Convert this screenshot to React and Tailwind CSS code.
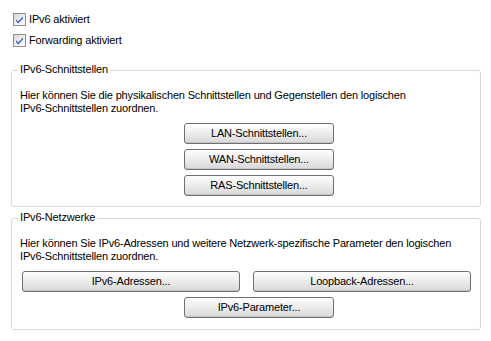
import React from "react";

function Check() {
  return (
    <svg width="13" height="13" viewBox="0 0 13 13" className="shrink-0">
      <defs>
        <linearGradient id="cbg" x1="0" y1="0" x2="1" y2="1">
          <stop offset="0" stopColor="#d9d9d9" />
          <stop offset="1" stopColor="#ffffff" />
        </linearGradient>
      </defs>
      <rect x="0.5" y="0.5" width="12" height="12" fill="url(#cbg)" stroke="#8e8f8f" />
      <path d="M3 6.2 L5.2 8.6 L10 3.6 L10 5.4 L5.2 10.4 L3 8 Z" fill="#3b5fcc" />
    </svg>
  );
}

function Btn({ w, children }) {
  return (
    <div
      className={`${w} h-[21px] flex items-center justify-center rounded-[3px] border border-[#707070] bg-gradient-to-b from-[#ffffff] via-[#ececec] to-[#d8d8d8] shadow-[inset_0_-1px_0_#c4c4c4]`}
    >
      {children}
    </div>
  );
}

function Group({ title, children }) {
  return (
    <div className="relative ml-[11px] w-[470px] rounded-[3px] border border-[#d0dbe3]">
      <span className="absolute -top-[8px] left-[6px] bg-white px-[2px] leading-[13px]">{title}</span>
      {children}
    </div>
  );
}

export default function App() {
  return (
    <div
      className="w-[491px] h-[341px] bg-white text-black text-[11px] leading-[13px] tracking-[-0.17px] overflow-hidden"
      style={{ fontFamily: '"Liberation Sans", Arial, sans-serif' }}
    >
      <div className="pt-[13px] pl-[13px] flex flex-col gap-[8px]">
        <div className="flex items-center gap-[3px] h-[13px]">
          <Check />
          <span>IPv6 aktiviert</span>
        </div>
        <div className="flex items-center gap-[3px] h-[13px]">
          <Check />
          <span>Forwarding aktiviert</span>
        </div>
      </div>

      <div className="mt-[23px]">
        <Group title="IPv6-Schnittstellen">
          <div className="pt-[18px] pb-[10px] pl-[8px]">
            <p>Hier können Sie die physikalischen Schnittstellen und Gegenstellen den logischen</p>
            <p>IPv6-Schnittstellen zuordnen.</p>
            <div className="mt-[8px] pl-[164px] flex flex-col gap-[5px]">
              <Btn w="w-[150px]">LAN-Schnittstellen...</Btn>
              <Btn w="w-[150px]">WAN-Schnittstellen...</Btn>
              <Btn w="w-[150px]">RAS-Schnittstellen...</Btn>
            </div>
          </div>
        </Group>
      </div>

      <div className="mt-[11px]">
        <Group title="IPv6-Netzwerke">
          <div className="pt-[18px] pb-[11px] pl-[8px]">
            <p>Hier können Sie IPv6-Adressen und weitere Netzwerk-spezifische Parameter den logischen</p>
            <p>IPv6-Schnittstellen zuordnen.</p>
            <div className="mt-[8px] pl-[2px] flex flex-col gap-[5px]">
              <div className="flex gap-[13px]">
                <Btn w="w-[218px]">IPv6-Adressen...</Btn>
                <Btn w="w-[218px]">Loopback-Adressen...</Btn>
              </div>
              <div className="pl-[162px]">
                <Btn w="w-[150px]">IPv6-Parameter...</Btn>
              </div>
            </div>
          </div>
        </Group>
      </div>
    </div>
  );
}
